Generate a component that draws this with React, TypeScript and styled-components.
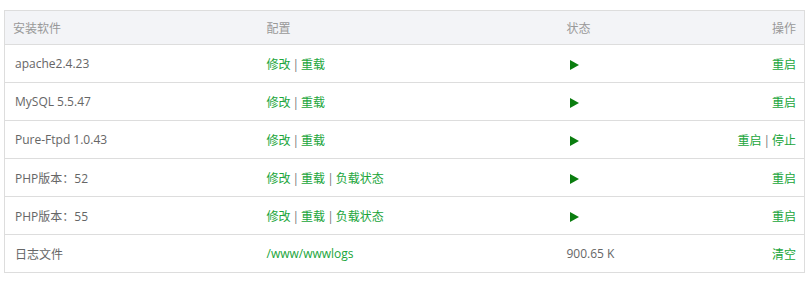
import React from "react";
import styled, { createGlobalStyle } from "styled-components";

const GlobalStyle = createGlobalStyle`
  body {
    margin: 0;
    background: #fff;
    font-family: "Open Sans", "Noto Sans CJK SC", sans-serif;
    font-size: 12px;
  }
`;

const Wrap = styled.div`
  padding: 10px 4px;
`;

const Table = styled.table`
  width: 100%;
  border-collapse: collapse;
  border: 1px solid #ddd;
  table-layout: fixed;
`;

const Th = styled.th<{ $right?: boolean }>`
  height: 33px;
  padding: 0 8px;
  background: #f3f4f7;
  color: #999;
  font-weight: normal;
  text-align: ${(p) => (p.$right ? "right" : "left")};
  border-bottom: 1px solid #ddd;
`;

const Td = styled.td<{ $right?: boolean }>`
  height: 37px;
  padding: 0 8px;
  color: #666;
  text-align: ${(p) => (p.$right ? "right" : "left")};
  border-bottom: 1px solid #ddd;
`;

const Name = styled.span`
  padding-left: 2px;
`;

const Link = styled.a`
  color: #20a53a;
  text-decoration: none;
  cursor: pointer;
`;

const Sep = styled.span`
  color: #777;
  margin: 0 2px;
`;

const Play = styled.span`
  display: inline-block;
  width: 0;
  height: 0;
  margin-left: 3px;
  vertical-align: middle;
  border-top: 5px solid transparent;
  border-bottom: 5px solid transparent;
  border-left: 9px solid #0a7d0f;
`;

type Row = {
  name: string;
  config: string[];
  status: "run" | string;
  ops: string[];
};

const rows: Row[] = [
  { name: "apache2.4.23", config: ["修改", "重载"], status: "run", ops: ["重启"] },
  { name: "MySQL 5.5.47", config: ["修改", "重载"], status: "run", ops: ["重启"] },
  { name: "Pure-Ftpd 1.0.43", config: ["修改", "重载"], status: "run", ops: ["重启", "停止"] },
  { name: "PHP版本：52", config: ["修改", "重载", "负载状态"], status: "run", ops: ["重启"] },
  { name: "PHP版本：55", config: ["修改", "重载", "负载状态"], status: "run", ops: ["重启"] },
  { name: "日志文件", config: ["/www/wwwlogs"], status: "900.65 K", ops: ["清空"] },
];

const Links = ({ items }: { items: string[] }) => (
  <>
    {items.map((t, i) => (
      <React.Fragment key={t}>
        {i > 0 && <Sep>|</Sep>}
        <Link>{t}</Link>
      </React.Fragment>
    ))}
  </>
);

export default function App() {
  return (
    <>
      <GlobalStyle />
      <Wrap>
        <Table>
          <colgroup>
            <col style={{ width: 254 }} />
            <col style={{ width: 300 }} />
            <col style={{ width: 120 }} />
            <col />
          </colgroup>
          <thead>
            <tr>
              <Th>安装软件</Th>
              <Th>配置</Th>
              <Th>状态</Th>
              <Th $right>操作</Th>
            </tr>
          </thead>
          <tbody>
            {rows.map((r) => (
              <tr key={r.name}>
                <Td>
                  <Name>{r.name}</Name>
                </Td>
                <Td>
                  <Links items={r.config} />
                </Td>
                <Td>{r.status === "run" ? <Play /> : r.status}</Td>
                <Td $right>
                  <Links items={r.ops} />
                </Td>
              </tr>
            ))}
          </tbody>
        </Table>
      </Wrap>
    </>
  );
}
